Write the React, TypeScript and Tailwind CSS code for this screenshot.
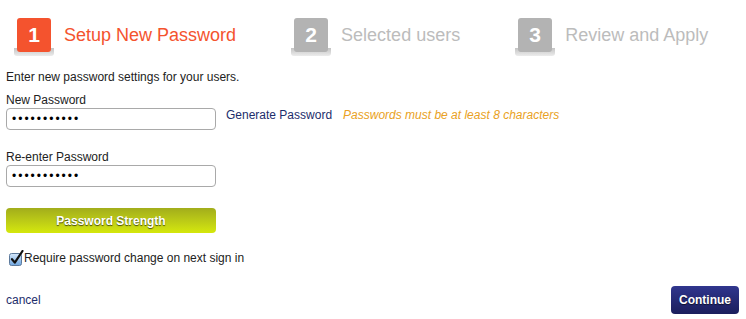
import React from 'react';

const steps = [
  { n: '1', label: 'Setup New Password', active: true },
  { n: '2', label: 'Selected users', active: false },
  { n: '3', label: 'Review and Apply', active: false },
];

const StepBox = ({ n, active }: { n: string; active: boolean }) => (
  <div className="relative w-[34px] h-[34px]">
    <div className="absolute left-[-3px] right-[-3px] top-[30px] h-[8px] rounded-b-[3px] bg-gradient-to-b from-[#c4c4c4] to-[#ececec]" />
    <div
      className={`relative z-10 w-[34px] h-[34px] rounded-[3px] flex items-center justify-center text-white font-bold text-[21px] ${
        active ? 'bg-[#f4532e]' : 'bg-[#b3b3b3]'
      }`}
    >
      {n}
    </div>
  </div>
);

const CheckBox = () => (
  <svg width="16" height="16" viewBox="0 0 16 16" className="shrink-0">
    <defs>
      <linearGradient id="cb" x1="0" y1="0" x2="0" y2="1">
        <stop offset="0" stopColor="#d6e8fb" />
        <stop offset="1" stopColor="#6fa6e0" />
      </linearGradient>
    </defs>
    <rect x="1.5" y="3.5" width="12" height="12" rx="2" fill="url(#cb)" stroke="#5d7a9c" />
    <path d="M4 9.2 L6.8 12.6 L14.5 1" fill="none" stroke="#111" strokeWidth="2.2" strokeLinecap="round" strokeLinejoin="round" />
  </svg>
);

export default function App() {
  return (
    <div className="w-[746px] h-[319px] bg-white font-['Liberation_Sans',Arial,sans-serif] text-[12px] text-[#222] pl-[6px] pr-[7px] overflow-hidden">
      <div className="flex items-center gap-[58px] pl-[11px] pt-[18px]">
        {steps.map((s) => (
          <div key={s.n} className="flex items-center gap-[13px]">
            <StepBox n={s.n} active={s.active} />
            <span className={`text-[18px] ${s.active ? 'text-[#f4532e]' : 'text-[#bcbcbc]'}`}>{s.label}</span>
          </div>
        ))}
      </div>

      <p className="mt-[18px] leading-[15px]">Enter new password settings for your users.</p>

      <div className="mt-[8px] leading-[15px]">New Password</div>
      <div className="flex items-start">
        <input
          type="password"
          readOnly
          value="abcdefghijk"
          className="w-[210px] h-[22px] border border-[#a9a9a9] rounded-[4px] px-[5px] text-[12px] tracking-[2px] text-black outline-none"
        />
        <a className="ml-[10px] leading-[15px] text-[#1d2d6b]">Generate Password</a>
        <span className="ml-[11px] leading-[15px] italic text-[#e9a123]">Passwords must be at least 8 characters</span>
      </div>

      <div className="mt-[20px] leading-[15px]">Re-enter Password</div>
      <input
        type="password"
        readOnly
        value="abcdefghijk"
        className="w-[210px] h-[22px] border border-[#a9a9a9] rounded-[4px] px-[5px] text-[12px] tracking-[2px] text-black outline-none"
      />

      <div className="mt-[21px] w-[210px] h-[25px] rounded-[4px] bg-gradient-to-b from-[#a2ad1b] to-[#d5e80b] flex items-center justify-center text-white font-bold text-[12px] [text-shadow:0_1px_1px_rgba(0,0,0,0.65)]">
        Password Strength
      </div>

      <label className="mt-[17px] flex items-center pl-[2px] leading-[16px]">
        <CheckBox />
        <span>Require password change on next sign in</span>
      </label>

      <div className="mt-[20px] flex items-center justify-between">
        <a className="text-[#1d2d6b]">cancel</a>
        <button className="h-[28px] px-[8px] rounded-[4px] bg-gradient-to-b from-[#30368e] to-[#1b1e5c] text-white font-bold text-[12px] [text-shadow:0_1px_1px_rgba(0,0,0,0.6)]">
          Continue
        </button>
      </div>
    </div>
  );
}
